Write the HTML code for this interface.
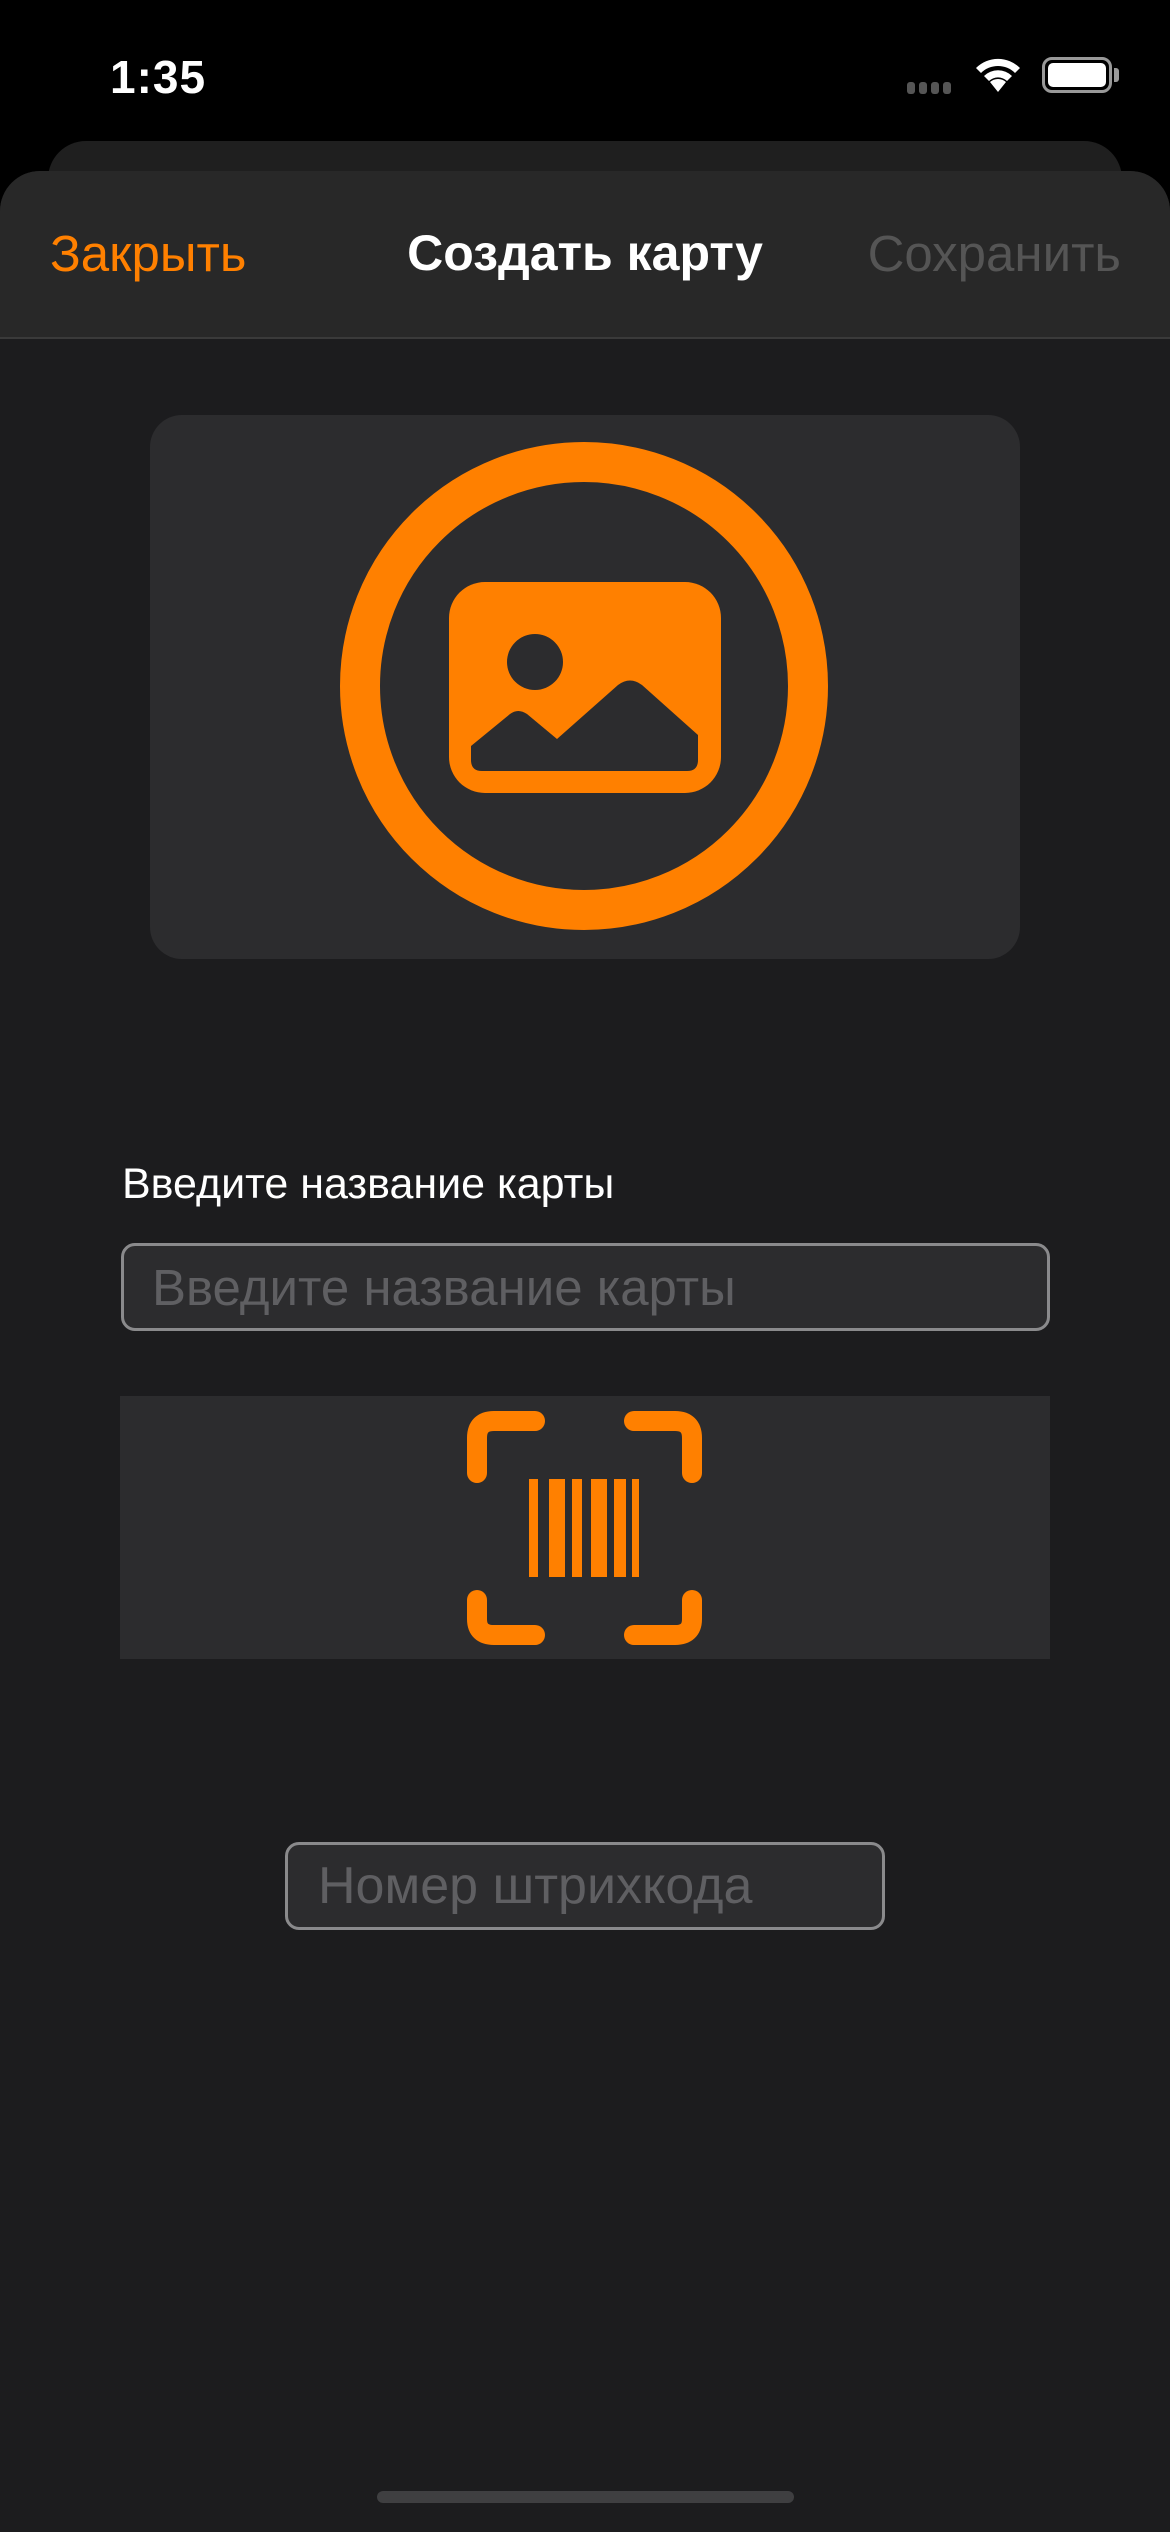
<!DOCTYPE html>
<html><head><meta charset="utf-8"><style>
*{margin:0;padding:0;box-sizing:border-box}
body{width:1170px;height:2532px;background:#000;position:relative;overflow:hidden;font-family:"Liberation Sans",sans-serif}
.abs{position:absolute}
</style></head><body>
<div class="abs" style="left:110px;top:50px;color:#fff;font-size:46px;font-weight:bold;letter-spacing:1px">1:35</div>
<div class="abs" style="left:907px;top:82px;width:50px;height:12px">
 <span class="abs" style="left:0;width:8px;height:12px;border-radius:3px;background:#555"></span>
 <span class="abs" style="left:12px;width:8px;height:12px;border-radius:3px;background:#555"></span>
 <span class="abs" style="left:24px;width:8px;height:12px;border-radius:3px;background:#555"></span>
 <span class="abs" style="left:36px;width:8px;height:12px;border-radius:3px;background:#555"></span>
</div>
<svg class="abs" style="left:972px;top:54px" width="52" height="40" viewBox="0 0 52 40"><path d="M26 38 L18 28 A12 12 0 0 1 34 28 Z M12 22 A20 20 0 0 1 40 22 L35 27 A13 13 0 0 0 17 27 Z M4 14 A31 31 0 0 1 48 14 L43 19 A24 24 0 0 0 9 19 Z" fill="#fff"/></svg>
<div class="abs" style="left:1042px;top:57px;width:70px;height:36px;border:3px solid #999;border-radius:10px"><div style="margin:3px;height:24px;background:#fff;border-radius:5px"></div></div>
<div class="abs" style="left:1114px;top:68px;width:5px;height:14px;background:#999;border-radius:0 3px 3px 0"></div>

<div class="abs" style="left:48px;top:141px;width:1074px;height:100px;background:#1f1f1f;border-radius:38px 38px 0 0"></div>
<div class="abs" style="left:0;top:171px;width:1170px;height:2361px;background:#1c1c1e;border-radius:40px 40px 0 0;overflow:hidden">
 <div class="abs" style="left:0;top:0;width:1170px;height:168px;background:#282828;border-bottom:2px solid #3a3a3a"></div>
</div>
<div class="abs" style="left:50px;top:224px;color:#ff8000;font-size:51px">Закрыть</div>
<div class="abs" style="left:0;width:1170px;text-align:center;top:224px;color:#fff;font-size:50px;font-weight:bold">Создать карту</div>
<div class="abs" style="right:49px;top:224px;color:#555;font-size:51px">Сохранить</div>

<div class="abs" style="left:150px;top:415px;width:870px;height:544px;background:#2c2c2e;border-radius:32px"></div>
<svg class="abs" style="left:0;top:0" width="1170" height="1000">
 <circle cx="584" cy="686" r="224" fill="none" stroke="#ff8000" stroke-width="40"/>
 <rect x="449" y="582" width="272" height="211" rx="36" fill="#ff8000"/>
 <circle cx="535" cy="662" r="28" fill="#2c2c2e"/>
 <path d="M471 746 L510 714 Q518 708 527 714 L557 739 L618 685 Q630 676 642 685 L698 735 L698 760 Q698 771 687 771 L482 771 Q471 771 471 760 Z" fill="#2c2c2e"/>
</svg>

<div class="abs" style="left:122px;top:1160px;color:#fff;font-size:43px">Введите название карты</div>
<div class="abs" style="left:121px;top:1243px;width:929px;height:88px;border:3px solid #8a8a8c;border-radius:14px;background:#2c2c2e;color:#5f5f62;font-size:51px;padding:12px 0 0 28px">Введите название карты</div>

<div class="abs" style="left:120px;top:1396px;width:930px;height:263px;background:#2c2c2e"></div>
<svg class="abs" style="left:0;top:1380px" width="1170" height="300">
 <g fill="none" stroke="#ff8000" stroke-width="20" stroke-linecap="round">
  <path d="M477 93 V58 Q477 41 494 41 H535"/>
  <path d="M692 93 V58 Q692 41 675 41 H634"/>
  <path d="M477 220 V239 Q477 255 494 255 H535"/>
  <path d="M692 220 V239 Q692 255 675 255 H634"/>
 </g>
 <g fill="#ff8000">
  <rect x="529" y="99" width="9" height="98"/>
  <rect x="549" y="99" width="16" height="98"/>
  <rect x="572" y="99" width="10" height="98"/>
  <rect x="591" y="99" width="16" height="98"/>
  <rect x="614" y="99" width="12" height="98"/>
  <rect x="632" y="99" width="7" height="98"/>
 </g>
</svg>

<div class="abs" style="left:285px;top:1842px;width:600px;height:88px;border:3px solid #8a8a8c;border-radius:14px;background:#2c2c2e;color:#5f5f62;font-size:52px;padding:11px 0 0 30px">Номер штрихкода</div>

<div class="abs" style="left:377px;top:2491px;width:417px;height:12px;border-radius:6px;background:#3f3f41"></div>
</body></html>
